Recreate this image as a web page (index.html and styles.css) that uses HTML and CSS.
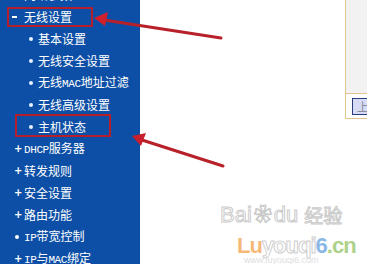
FILE: index.html
```html
<!DOCTYPE html>
<html lang="zh-CN">
<head>
<meta charset="utf-8">
<title>无线设置</title>
<link rel="stylesheet" href="styles.css">
</head>
<body>
<div class="page">
  <nav class="sidebar">
    <ul class="menu">
      <li class="item top"><span class="ico plus">+</span><span class="label">网络参数</span></li>
      <li class="item top"><span class="ico minus"></span><span class="label">无线设置</span></li>
      <li class="item sub"><span class="dot"></span><span class="label">基本设置</span></li>
      <li class="item sub"><span class="dot"></span><span class="label">无线安全设置</span></li>
      <li class="item sub"><span class="dot"></span><span class="label">无线<span class="lat">MAC</span>地址过滤</span></li>
      <li class="item sub"><span class="dot"></span><span class="label">无线高级设置</span></li>
      <li class="item sub"><span class="dot"></span><span class="label">主机状态</span></li>
      <li class="item top"><span class="ico plus">+</span><span class="label"><span class="lat">DHCP</span>服务器</span></li>
      <li class="item top"><span class="ico plus">+</span><span class="label">转发规则</span></li>
      <li class="item top"><span class="ico plus">+</span><span class="label">安全设置</span></li>
      <li class="item top"><span class="ico plus">+</span><span class="label">路由功能</span></li>
      <li class="item top"><span class="ico dotbig"></span><span class="label"><span class="lat">IP</span>带宽控制</span></li>
      <li class="item top"><span class="ico plus">+</span><span class="label"><span class="lat">IP</span>与<span class="lat">MAC</span>绑定</span></li>
    </ul>
  </nav>
  <main class="content">
    <div class="panel">
      <div class="panel-body"></div>
      <div class="panel-foot"><span class="btn">上一页</span></div>
    </div>
  </main>
</div>

<div class="mark box1"></div>
<div class="mark box2"></div>
<svg class="arrows" width="367" height="264" viewBox="0 0 367 264">
  <line x1="221" y1="38" x2="104" y2="20" stroke="#b8202a" stroke-width="3" stroke-linecap="round"/>
  <polygon points="94,18 108,12 105,26" fill="#d0202c"/>
  <line x1="223" y1="166" x2="142" y2="140" stroke="#b8202a" stroke-width="3" stroke-linecap="round"/>
  <polygon points="132,136 146,133 141,146" fill="#c8202c"/>
</svg>

<div class="watermark">
  <div class="baidu"><span class="bd">Bai</span><span class="paw">❀</span><span class="bd">du</span><span class="jy">经验</span></div>
  <div class="luy"><span class="lu">Lu</span><span class="you">youqi</span><span class="six">6</span><span class="cn">.cn</span></div>
  <div class="lurl">www.luyouqi6.com</div>
</div>
</body>
</html>
```

FILE: styles.css
```css
html, body {
  margin: 0;
  padding: 0;
  width: 367px;
  height: 264px;
  overflow: hidden;
  background: #ffffff;
}

.page {
  display: flex;
  width: 367px;
  height: 264px;
  overflow: hidden;
}

.sidebar {
  width: 140px;
  flex: 0 0 140px;
  background: #0d4fa6;
  overflow: hidden;
}

.menu {
  list-style: none;
  margin: -16px 0 0 0;
  padding: 0;
}

.item {
  height: 22px;
  display: flex;
  align-items: center;
  color: #ffffff;
  font-family: "Noto Sans CJK SC", "Liberation Sans", sans-serif;
  font-size: 12px;
  line-height: 12px;
  white-space: nowrap;
}

.item.top {
  padding-left: 12px;
}

.item.sub {
  padding-left: 29px;
}

.ico {
  width: 12px;
  flex: 0 0 12px;
  display: flex;
  align-items: center;
  font-family: "DejaVu Sans", sans-serif;
  font-weight: bold;
  font-size: 10px;
}

.ico.plus {
  padding-left: 2px;
  box-sizing: border-box;
}

.ico.minus::before {
  content: "";
  display: block;
  width: 5px;
  height: 2px;
  background: #ffffff;
}

.ico.dotbig::before {
  content: "";
  display: block;
  margin-left: 3px;
  width: 4px;
  height: 4px;
  background: #ffffff;
  border-radius: 50%;
}

.dot {
  width: 9px;
  flex: 0 0 9px;
  display: flex;
  align-items: center;
}

.dot::before {
  content: "";
  display: block;
  width: 4px;
  height: 4px;
  background: #e8f0ff;
  border-radius: 50%;
}

.lat {
  font-family: "Liberation Mono", monospace;
  font-size: 11px;
  letter-spacing: -0.4px;
}

.content {
  flex: 1;
  padding-left: 205px;
  overflow: hidden;
}

.panel {
  width: 60px;
  height: 118px;
  border: 1px solid #e2c48e;
  border-top: none;
  display: flex;
  flex-direction: column;
}

.panel-body {
  height: 93px;
  background: #f2f2f2;
  border-bottom: 1px solid #e2c48e;
}

.panel-foot {
  flex: 1;
  background: #ffffff;
  padding: 4px 0 0 6px;
}

.btn {
  display: inline-block;
  height: 15px;
  padding: 0 4px;
  border: 1px solid #2b3d7d;
  background: #d6dcf6;
  color: #8a8a9a;
  font-family: "Noto Sans CJK SC", sans-serif;
  font-size: 12px;
  line-height: 15px;
  white-space: nowrap;
}

.mark {
  position: absolute;
  border: 2px solid #b41f2b;
  box-sizing: border-box;
}

.box1 {
  left: 7px;
  top: 7px;
  width: 86px;
  height: 20px;
}

.box2 {
  left: 15px;
  top: 114px;
  width: 96px;
  height: 23px;
}

.arrows {
  position: absolute;
  left: 0;
  top: 0;
}

.watermark {
  position: absolute;
  left: 220px;
  top: 200px;
  width: 147px;
  opacity: 0.6;
}

.baidu {
  display: flex;
  align-items: flex-end;
  gap: 2px;
  height: 26px;
  color: #ffffff;
  font-family: "Liberation Sans", sans-serif;
  font-size: 22px;
  line-height: 22px;
  -webkit-text-stroke: 1px #a8a8a8;
}

.baidu .paw {
  font-size: 18px;
}

.baidu .jy {
  font-family: "Noto Sans CJK SC", sans-serif;
  font-size: 19px;
  line-height: 22px;
  margin-left: 4px;
}

.luy {
  margin-top: 10px;
  margin-left: 17px;
  font-family: "Liberation Sans", sans-serif;
  font-weight: bold;
  font-size: 22px;
  line-height: 20px;
  letter-spacing: -1px;
}

.lu { color: #f08a1e; }
.you { color: #ffffff; -webkit-text-stroke: 1px #b0b0b0; }
.six { color: #3c8ad8; }
.cn { color: #78b43c; }

.lurl {
  margin-left: 24px;
  font-family: "Liberation Sans", sans-serif;
  font-size: 9px;
  line-height: 9px;
  color: #c8c8c8;
}
```
